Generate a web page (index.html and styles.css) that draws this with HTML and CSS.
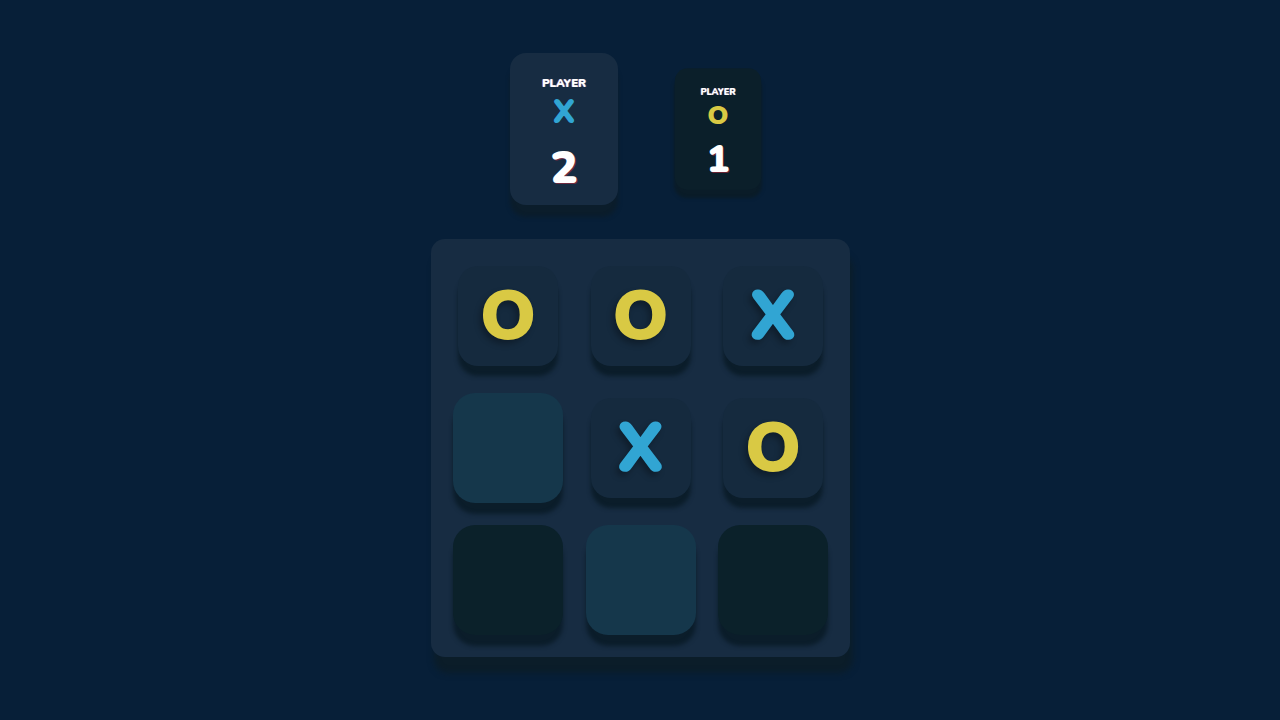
FILE: index.html
```html
<!DOCTYPE html>
<html lang="en">
<head>
<meta charset="utf-8">
<title>Tic Tac Toe</title>
<link rel="stylesheet" href="styles.css">
</head>
<body>
<main class="app">
  <section class="scores">
    <div class="card active">
      <span class="card-label">PLAYER</span>
      <span class="card-mark mark-x">X</span>
      <span class="card-score">2</span>
    </div>
    <div class="card inactive">
      <span class="card-label">PLAYER</span>
      <span class="card-mark mark-o">O</span>
      <span class="card-score">1</span>
    </div>
  </section>
  <section class="board">
    <div class="cell"><span class="mark mark-o">O</span></div>
    <div class="cell"><span class="mark mark-o">O</span></div>
    <div class="cell"><span class="mark mark-x">X</span></div>
    <div class="cell cell-hover"></div>
    <div class="cell"><span class="mark mark-x">X</span></div>
    <div class="cell"><span class="mark mark-o">O</span></div>
    <div class="cell cell-dark"></div>
    <div class="cell cell-hover"></div>
    <div class="cell cell-dark"></div>
  </section>
</main>
</body>
</html>
```
FILE: styles.css
```css
html, body {
  margin: 0;
  padding: 0;
}
body {
  background: #071f38;
  font-family: "Nunito", "Lato", "DejaVu Sans", sans-serif;
  height: 720px;
  overflow: hidden;
}
.app {
  display: flex;
  flex-direction: column;
  align-items: center;
  padding-top: 53px;
}
.scores {
  display: flex;
  align-items: center;
  gap: 46px;
  margin-left: 2px;
}
.card {
  width: 108px;
  height: 152px;
  box-sizing: border-box;
  border-radius: 16px;
  background: #172c42;
  box-shadow: 0 12px 4px #0b1d2b;
  display: flex;
  flex-direction: column;
  align-items: center;
  padding-top: 23px;
  color: #fff;
}
.card.inactive {
  background: #0b1f2a;
  transform: scale(0.8);
  box-shadow: 0 10px 4px #0a1c28;
}
.card-label {
  font-weight: 900;
  font-size: 11.5px;
  line-height: 14px;
  letter-spacing: -0.3px;
  text-shadow: -1px 0 0 rgba(255, 80, 80, 0.35), 1px 0 0 rgba(80, 160, 255, 0.35);
}
.card-mark {
  font-weight: 900;
  font-size: 33px;
  line-height: 32px;
  margin-top: 7px;
}
.card-score {
  font-weight: 900;
  font-size: 46px;
  line-height: 46px;
  margin-top: 16px;
  text-shadow: 1px 1px 0 rgba(200, 40, 60, 0.5);
}
.mark-x {
  color: #31a5d3;
}
.mark-o {
  color: #d9c944;
}
.board {
  margin-top: 34px;
  margin-left: 1px;
  padding: 27px;
  display: grid;
  grid-template-columns: repeat(3, 100px);
  grid-template-rows: repeat(3, 100px);
  column-gap: 32.5px;
  row-gap: 32px;
  background: #172c42;
  border-radius: 14px;
  box-shadow: 3px 16px 6px #0b1d29;
}
.cell {
  width: 100px;
  height: 100px;
  border-radius: 20px;
  background: #152a3e;
  box-shadow: 0 10px 4px #0b1d2a;
  display: flex;
  align-items: center;
  justify-content: center;
}
.cell-hover {
  background: #15374b;
  transform: scale(1.1);
}
.cell-dark {
  background: #0b212a;
  transform: scale(1.1);
}
.mark {
  font-weight: 900;
  font-size: 70px;
  line-height: 1;
  text-shadow: -3px 4px 6px rgba(0, 0, 0, 0.3);
}
```
